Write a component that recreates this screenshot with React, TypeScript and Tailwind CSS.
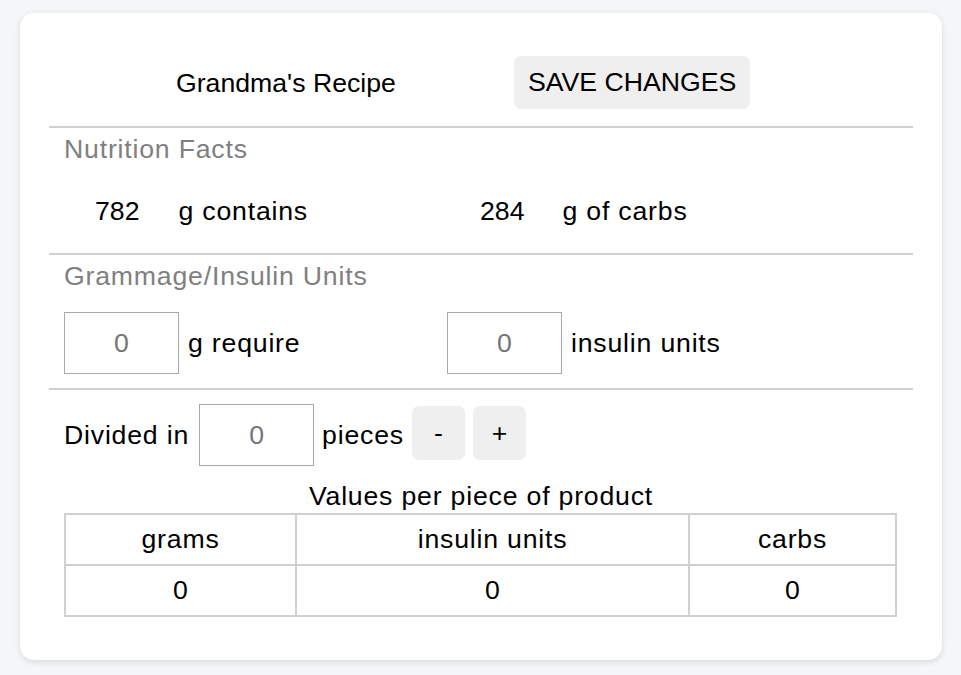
import React, { useState } from 'react';

const font = { fontFamily: '"Liberation Sans", Arial, sans-serif' };

const Divider: React.FC = () => <div className="h-[2px] bg-[#d0d0d0]" />;

interface NumBoxProps {
  value: number;
  onChange?: (v: number) => void;
}

const NumBox: React.FC<NumBoxProps> = ({ value, onChange }) => (
  <input
    type="text"
    value={value}
    onChange={(e) => onChange && onChange(Number(e.target.value) || 0)}
    className="w-[115px] h-[62px] border border-[#a9a9a9] text-center text-[26.67px] tracking-normal text-[#757575] bg-white outline-none"
    style={font}
  />
);

const App: React.FC = () => {
  const [pieces, setPieces] = useState(0);

  return (
    <div className="min-h-[675px] bg-[#f5f6f8] pt-[13px] pb-[15px]" style={font}>
      <div className="ml-[20px] w-[922px] h-[647px] bg-white rounded-[14px] shadow-[0_2px_6px_rgba(0,0,0,0.12)] px-[29px] text-[26.67px] leading-[31px] tracking-[0.8px] text-black">
        {/* header */}
        <div className="flex items-center pt-[43px] pb-[17px] pl-[127px] tracking-normal">
          <span className="translate-y-[1px]">Grandma's Recipe</span>
          <button className="ml-[118px] h-[53px] px-[14px] bg-[#efefef] rounded-[7px] text-[26.67px]">SAVE CHANGES</button>
        </div>
        <Divider />

        {/* nutrition facts */}
        <div className="px-[15px] pt-[6px] pb-[26px]">
          <div className="text-[#808080]">Nutrition Facts</div>
          <div className="flex mt-[31px]">
            <div className="w-[383px] flex">
              <span className="pl-[31px] tracking-normal">782</span>
              <span className="ml-[39px]">g contains</span>
            </div>
            <div className="flex">
              <span className="pl-[33px] tracking-normal">284</span>
              <span className="ml-[38px]">g of carbs</span>
            </div>
          </div>
        </div>
        <Divider />

        {/* grammage */}
        <div className="px-[15px] pt-[6px] pb-[14px]">
          <div className="text-[#808080]">Grammage/Insulin Units</div>
          <div className="flex mt-[20px]">
            <div className="w-[383px] flex items-center">
              <NumBox value={0} />
              <span className="ml-[9px]">g require</span>
            </div>
            <div className="flex items-center">
              <NumBox value={0} />
              <span className="ml-[9px]">insulin units</span>
            </div>
          </div>
        </div>
        <Divider />

        {/* pieces */}
        <div className="px-[15px] pt-[14px]">
          <div className="flex items-center">
            <span>Divided in</span>
            <div className="ml-[10px]">
              <NumBox value={pieces} onChange={setPieces} />
            </div>
            <span className="ml-[8px]">pieces</span>
            <button
              onClick={() => setPieces(Math.max(0, pieces - 1))}
              className="ml-[8px] self-start mt-[2px] w-[53px] h-[54px] bg-[#efefef] rounded-[7px] text-[26.67px] tracking-normal"
            >
              -
            </button>
            <button
              onClick={() => setPieces(pieces + 1)}
              className="ml-[8px] self-start mt-[2px] w-[53px] h-[54px] bg-[#efefef] rounded-[7px] text-[26.67px] tracking-normal"
            >
              +
            </button>
          </div>
          <div className="text-center mt-[15px]">Values per piece of product</div>
          <table className="mt-[1px] w-[833px] border-collapse border-2 border-[#d0d0d0] text-center">
            <thead>
              <tr className="h-[51px]">
                <th className="w-[231px] border-2 border-[#d0d0d0] font-normal">grams</th>
                <th className="w-[393px] border-2 border-[#d0d0d0] font-normal">insulin units</th>
                <th className="border-2 border-[#d0d0d0] font-normal">carbs</th>
              </tr>
            </thead>
            <tbody>
              <tr className="h-[51px]">
                <td className="border-2 border-[#d0d0d0] tracking-normal">0</td>
                <td className="border-2 border-[#d0d0d0] tracking-normal">0</td>
                <td className="border-2 border-[#d0d0d0] tracking-normal">0</td>
              </tr>
            </tbody>
          </table>
        </div>
      </div>
    </div>
  );
};

export default App;
